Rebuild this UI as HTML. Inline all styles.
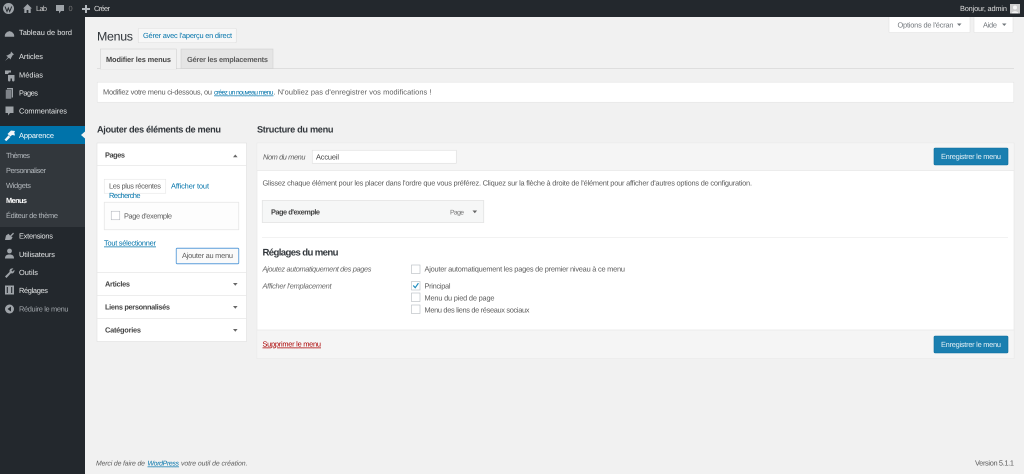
<!DOCTYPE html>
<html lang="fr"><head><meta charset="utf-8"><title>Menus</title>
<style>
html,body{margin:0;padding:0;width:1024px;height:474px;overflow:hidden;background:#f1f1f1}
svg{display:block;filter:blur(.35px)}
text{font-family:"Liberation Sans",sans-serif;font-size:7.4px;fill:#444;text-rendering:geometricPrecision}
.m{fill:#e4e6e7}.s{fill:#b4b9be}.b{font-weight:bold}.l{fill:#0073aa}.i{font-style:italic}
.h{font-size:9.2px;font-weight:bold;fill:#32373c}.g{fill:#5c5c5c}.d{fill:#444}
.ic{fill:#9ea3a8}
</style></head><body>
<svg width="1024" height="474" viewBox="0 0 1024 474" xmlns="http://www.w3.org/2000/svg">
<rect width="1024" height="474" fill="#f1f1f1"/>
<rect width="1024" height="17" fill="#23282d"/>
<rect y="17" width="85" height="457" fill="#23282d"/>
<rect y="126" width="85" height="18" fill="#0073aa"/>
<rect y="144" width="85" height="83" fill="#32373c"/>
<path d="M85 131.500L81 135 85 138.500z" fill="#f1f1f1"/>

<!-- admin bar -->
<circle cx="8.500" cy="8.500" r="5.500" fill="#9ea3a8"/>
<path d="M5 6.500l2 5 1.300-3.500 1.400 3.500 2-5" fill="none" stroke="#23282d" stroke-width="1"/>
<path class="ic" d="M27.500 4L23 8.500h1.300V13h2.300v-3h1.800v3h2.300V8.500H32z"/>
<text x="36" y="11" textLength="11" style="fill:#ccc">Lab</text>
<path class="ic" d="M56 5h8v6h-3l-2 2.500V11h-3z"/>
<text x="68.500" y="11" textLength="3.800" style="fill:#777">0</text>
<path d="M82 8h3V5h2v3h3v2h-3v3h-2v-3h-3z" fill="#b4b9be"/>
<text x="94" y="11" textLength="16" style="fill:#ddd">Créer</text>
<text x="960" y="11" textLength="47" style="fill:#ddd">Bonjour, admin</text>
<rect x="1010" y="4" width="10" height="9.500" fill="#ccc"/>
<circle cx="1015" cy="7.500" r="2" fill="#f4f4f4"/><path d="M1011.500 13.500c.5-3 6.500-3 7 0z" fill="#f4f4f4"/>

<!-- screen options -->
<rect x="889" y="17" width="81" height="15.500" fill="#fff"/><path d="M889 32.500h81M889 17v15.500M970 17v15.500" stroke="#e2e2e2" stroke-width=".6" fill="none"/>
<text x="897.500" y="27.500" textLength="56" style="fill:#72777c">Options de l'écran</text>
<path d="M957 23.500h4.500l-2.250 2.500z" fill="#72777c"/>
<rect x="974" y="17" width="39" height="15.500" fill="#fff"/><path d="M974 32.500h39M974 17v15.500M1013 17v15.500" stroke="#e2e2e2" stroke-width=".6" fill="none"/>
<text x="983" y="27.500" textLength="14" style="fill:#72777c">Aide</text>
<path d="M1002 23.500h4.500l-2.250 2.500z" fill="#72777c"/>

<!-- side menu icons -->
<path class="ic" d="M5 36a4.500 4.500 0 0 1 9 0v.5H5zM9.500 31v2" stroke="#9ea3a8" stroke-width=".5"/>
<path class="ic" d="M11 51.500l3 3-1.300.6-1.700 3-.3 1.400-1.800-1.800L5 61l3-3.700-1.800-1.800 1.400-.3 3-1.700z"/>
<path class="ic" d="M5 70.500h6v2H9l-1 1.500H5zM8 75h6.500v5.500a1.300 1.300 0 0 1-2.500 0v-2H10.500v2a1.300 1.300 0 0 1-2.500 0z"/>
<path class="ic" d="M7 88h6v9.500H7z"/><path d="M5.500 89.500h6v9.500h-6z" fill="#7e8389" stroke="#23282d" stroke-width=".5"/>
<path class="ic" d="M5.500 106.500h8v6.500h-3.500l-2 2.500V113H5.500z"/>
<path d="M4.500 139.800l4-4.500 1.800 1.800-4 4zM7.500 134l3.500-3.500 4 .5-.7 1.500.7 3-3-.5-1.500 1.500z" fill="#f1f5f8"/>
<path class="ic" d="M5 240l1-4.500 2.500-1.700 1.600 1.800 3-3 .9 1-2.800 2.900 1.400.6-1.300 2.500L9 240z"/>
<circle class="ic" cx="9.500" cy="251" r="2.400"/><path class="ic" d="M5 258.500c0-2.800 1.500-4 4.500-4s4.500 1.200 4.500 4z"/>
<path class="ic" d="M5 276.500l4.600-4.600c-.6-2.500 1.500-4 3.800-3.300l-2 1.800 1 1.200 2-1.900c.4 2.500-1.400 4.200-3.500 3.600L6.500 278z"/>
<rect class="ic" x="5" y="285.500" width="9" height="9"/><path d="M7.300 287v6M11.700 287v6" stroke="#23282d" stroke-width="1.100"/>
<circle cx="9.500" cy="309" r="4.500" fill="#9ea3a8"/><path d="M11 306.500v5L7.500 309z" fill="#23282d"/>

<!-- side menu -->
<text x="19" y="35" textLength="53" class="m">Tableau de bord</text>
<text x="19" y="59" textLength="24" class="m">Articles</text>
<text x="19" y="77.500" textLength="24" class="m">Médias</text>
<text x="19" y="95.500" textLength="19" class="m">Pages</text>
<text x="19" y="113.500" textLength="48" class="m">Commentaires</text>
<text x="19" y="138" textLength="35" style="fill:#fff">Apparence</text>
<text x="6" y="158" textLength="24" class="s">Thèmes</text>
<text x="6" y="173" textLength="40" class="s">Personnaliser</text>
<text x="6" y="188" textLength="25" class="s">Widgets</text>
<text x="6" y="203" textLength="21" class="b" style="fill:#fff">Menus</text>
<text x="6" y="218" textLength="52" class="s">Éditeur de thème</text>
<text x="19" y="238.500" textLength="34" class="m">Extensions</text>
<text x="19" y="257" textLength="36" class="m">Utilisateurs</text>
<text x="19" y="275" textLength="19" class="m">Outils</text>
<text x="19" y="293" textLength="29" class="m">Réglages</text>
<text x="19" y="311.500" textLength="49.500" style="fill:#9ea3a8">Réduire le menu</text>

<!-- heading -->
<text x="97" y="40.500" textLength="36" style="font-size:12.400px;fill:#32373c">Menus</text>
<rect x="138.250" y="28.250" width="98" height="14.500" rx="1" fill="#f7f7f7" stroke="#ddd" stroke-width=".6"/>
<text x="143" y="38" textLength="89" class="l">Gérer avec l'aperçu en direct</text>

<!-- nav tabs -->
<path d="M97 68.500H1014" stroke="#ccc" stroke-width=".6"/>
<rect x="181" y="49" width="92" height="19.500" fill="#e5e5e5" stroke="#ccc" stroke-width=".5"/>
<rect x="100.250" y="49" width="76" height="20" fill="#f1f1f1" stroke="#ccc" stroke-width=".5"/>
<rect x="100.500" y="68" width="75.500" height="1.200" fill="#f1f1f1"/>
<text x="106" y="62" textLength="65" class="b d">Modifier les menus</text>
<text x="187" y="62" textLength="81" class="b g">Gérer les emplacements</text>

<!-- notice -->
<rect x="97.250" y="82.250" width="916.500" height="20" fill="#fff" stroke="#e5e5e5" stroke-width=".6"/>
<text x="103" y="94.500" textLength="109" class="g">Modifiez votre menu ci-dessous, ou</text>
<text x="214" y="94.500" textLength="59.500" class="l" text-decoration="underline" style="font-size:6.700px">créez un nouveau menu</text>
<text x="273.500" y="94.500" textLength="158" class="g">. N'oubliez pas d'enregistrer vos modifications !</text>

<text x="97" y="132.500" textLength="124" class="h">Ajouter des éléments de menu</text>
<text x="257" y="132.500" textLength="76.500" class="h">Structure du menu</text>

<!-- left column -->
<rect x="97" y="143" width="149.500" height="198.500" fill="#fff" stroke="#e0e0e0" stroke-width=".6"/>
<path d="M97 165.500h149.500M97 272.500h149.500M97 295.500h149.500M97 318.500h149.500" stroke="#e8e8e8" stroke-width=".8"/>
<text x="105" y="157.500" textLength="20" class="b d" >Pages</text>
<path d="M233 157.200h4.600l-2.300-2.700z" fill="#666"/>
<rect x="104.250" y="179.250" width="61.500" height="14" fill="#fff" stroke="#e5e5e5" stroke-width=".6"/>
<text x="109" y="188.500" textLength="52" class="g">Les plus récentes</text>
<text x="171" y="188.500" textLength="38" class="l">Afficher tout</text>
<text x="109" y="198" textLength="31.500" class="l">Recherche</text>
<rect x="104.250" y="202.250" width="134.500" height="27.500" fill="#fdfdfd" stroke="#e5e5e5" stroke-width=".7"/>
<rect x="111.250" y="211.250" width="8.500" height="8.500" fill="#fff" stroke="#b4b9be" stroke-width=".6"/>
<text x="124" y="218.500" textLength="48" class="g">Page d'exemple</text>
<text x="104" y="245.500" textLength="52" class="l" text-decoration="underline">Tout sélectionner</text>
<rect x="176.250" y="248.250" width="62.500" height="15.500" rx="1" fill="#fafafa" stroke="#5b9dd9" stroke-width=".9"/>
<text x="182" y="258" textLength="51" class="g">Ajouter au menu</text>
<text x="105" y="286.500" textLength="25" class="b d">Articles</text>
<text x="105" y="309.500" textLength="65" class="b d">Liens personnalisés</text>
<text x="105" y="332.500" textLength="36" class="b d">Catégories</text>
<path d="M233 283h4.600l-2.300 2.700zM233 306h4.600l-2.300 2.700zM233 329h4.600l-2.300 2.700z" fill="#666"/>

<!-- right column -->
<rect x="257" y="143" width="757" height="215.500" fill="#fff" stroke="#e5e5e5" stroke-width=".6"/>
<rect x="257.300" y="143.300" width="756.400" height="27" fill="#f5f5f5"/>
<rect x="257.300" y="330" width="756.400" height="28.200" fill="#f5f5f5"/>
<path d="M257 170.500h757M257 330h757" stroke="#e8e8e8" stroke-width=".7"/>
<text x="263" y="159.500" textLength="42.500" class="i g">Nom du menu</text>
<rect x="312.250" y="150.250" width="144" height="13" fill="#fff" stroke="#ddd" stroke-width=".6"/>
<text x="316" y="159.500" textLength="23" class="d">Accueil</text>
<rect x="934" y="148" width="74" height="17" rx="1.200" fill="#1a7fb0" stroke="#0d6f9e" stroke-width=".6"/>
<text x="941" y="159" textLength="60" style="fill:#e6f1f6">Enregistrer le menu</text>
<text x="262.500" y="185.500" textLength="489.500" class="g">Glissez chaque élément pour les placer dans l'ordre que vous préférez. Cliquez sur la flèche à droite de l'élément pour afficher d'autres options de configuration.</text>
<rect x="262.250" y="200.500" width="221.500" height="22" fill="#f6f7f7" stroke="#e0e0e0" stroke-width=".7"/>
<text x="271" y="214.500" textLength="49" class="b d">Page d'exemple</text>
<text x="450" y="214.500" textLength="14" style="fill:#777;font-size:6.800px">Page</text>
<path d="M472.500 210.500h4.600l-2.300 2.700z" fill="#666"/>
<path d="M262 237.500h746" stroke="#eee" stroke-width=".8"/>
<text x="262.500" y="255.500" textLength="76" class="h" style="font-size:9.600px">Réglages du menu</text>
<text x="262.500" y="271.500" textLength="109" class="i" style="fill:#666">Ajoutez automatiquement des pages</text>
<text x="262.500" y="288.500" textLength="69" class="i" style="fill:#666">Afficher l'emplacement</text>
<rect x="411.500" y="265" width="8.500" height="8.500" fill="#fff" stroke="#b4b9be" stroke-width=".6"/>
<rect x="411.500" y="281.500" width="8.500" height="8.500" fill="#fff" stroke="#b4b9be" stroke-width=".6"/>
<path d="M413.200 285.500l2 2.200 3.200-4.500" fill="none" stroke="#1e8cbe" stroke-width="1.200"/>
<rect x="411.500" y="293" width="8.500" height="8.500" fill="#fff" stroke="#b4b9be" stroke-width=".6"/>
<rect x="411.500" y="305" width="8.500" height="8.500" fill="#fff" stroke="#b4b9be" stroke-width=".6"/>
<text x="424.500" y="271.500" textLength="200.500" class="g">Ajouter automatiquement les pages de premier niveau à ce menu</text>
<text x="424.500" y="288.500" textLength="26" class="g">Principal</text>
<text x="424.500" y="300.500" textLength="70" class="g">Menu du pied de page</text>
<text x="424.500" y="312.500" textLength="105" class="g">Menu des liens de réseaux sociaux</text>
<text x="262.500" y="346.500" textLength="58.500" style="fill:#a00" text-decoration="underline">Supprimer le menu</text>
<rect x="934" y="336" width="74" height="17" rx="1.200" fill="#1a7fb0" stroke="#0d6f9e" stroke-width=".6"/>
<text x="941" y="347" textLength="60" style="fill:#e6f1f6">Enregistrer le menu</text>

<!-- footer -->
<text x="96" y="465.500" textLength="49" class="i g" style="font-size:6.900px">Merci de faire de</text>
<text x="147.500" y="465.500" textLength="31.500" class="i l" text-decoration="underline" style="font-size:6.900px">WordPress</text>
<text x="181" y="465.500" textLength="66.500" class="i g" style="font-size:6.900px">votre outil de création.</text>
<text x="975" y="465.500" textLength="39" class="g">Version 5.1.1</text>
</svg>
</body></html>
